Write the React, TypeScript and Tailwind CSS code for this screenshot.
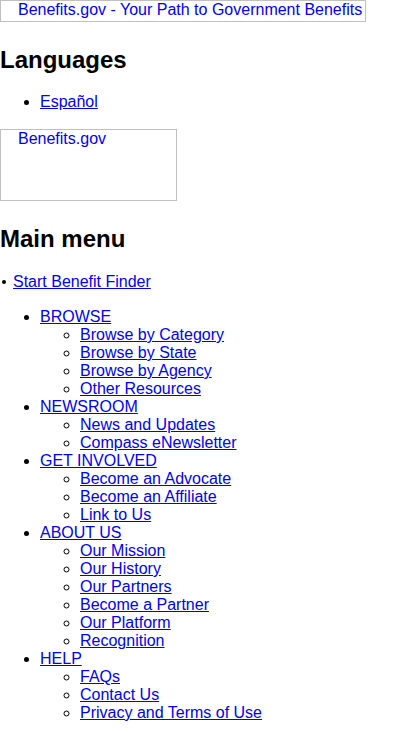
import React from "react";

const link = "text-[#0000ee] underline";

const menu: { title: string; items: string[] }[] = [
  { title: "BROWSE", items: ["Browse by Category", "Browse by State", "Browse by Agency", "Other Resources"] },
  { title: "NEWSROOM", items: ["News and Updates", "Compass eNewsletter"] },
  { title: "GET INVOLVED", items: ["Become an Advocate", "Become an Affiliate", "Link to Us"] },
  { title: "ABOUT US", items: ["Our Mission", "Our History", "Our Partners", "Become a Partner", "Our Platform", "Recognition"] },
  { title: "HELP", items: ["FAQs", "Contact Us", "Privacy and Terms of Use"] },
];

export default function App() {
  return (
    <div className="min-h-[732px] bg-white text-black text-[16px] leading-[18px] font-['Liberation_Sans',Arial,sans-serif]">
      <div className="h-[27px]">
        <a href="#" className="block w-[366px] h-[22px] border border-[#c0c0c0] pl-[17px] text-[#0000ee] whitespace-nowrap overflow-hidden">
          Benefits.gov - Your Path to Government Benefits
        </a>
      </div>
      <h2 className="mt-5 mb-5 text-[24px] leading-[26px] font-bold">Languages</h2>
      <ul className="list-disc pl-10 mb-[18px]">
        <li>
          <a href="#" className={link}>Español</a>
        </li>
      </ul>
      <div className="h-[77px]">
        <a href="#" className="block w-[177px] h-[72px] border border-[#c0c0c0] pl-[17px] text-[#0000ee]">
          Benefits.gov
        </a>
      </div>
      <h2 className="mt-5 mb-[21px] text-[24px] leading-[26px] font-bold">Main menu</h2>
      <ul className="list-none pl-0">
        <li className="flex items-center">
          <span className="w-[4px] h-[4px] rounded-full bg-black ml-[2px] mr-[7px]" />
          <a href="#" className={link}>Start Benefit Finder</a>
        </li>
      </ul>
      <ul className="list-disc pl-10 mt-[17px]">
        {menu.map((m) => (
          <li key={m.title}>
            <a href="#" className={link}>{m.title}</a>
            <ul className="list-[circle] pl-10">
              {m.items.map((it) => (
                <li key={it}>
                  <a href="#" className={link}>{it}</a>
                </li>
              ))}
            </ul>
          </li>
        ))}
      </ul>
    </div>
  );
}
